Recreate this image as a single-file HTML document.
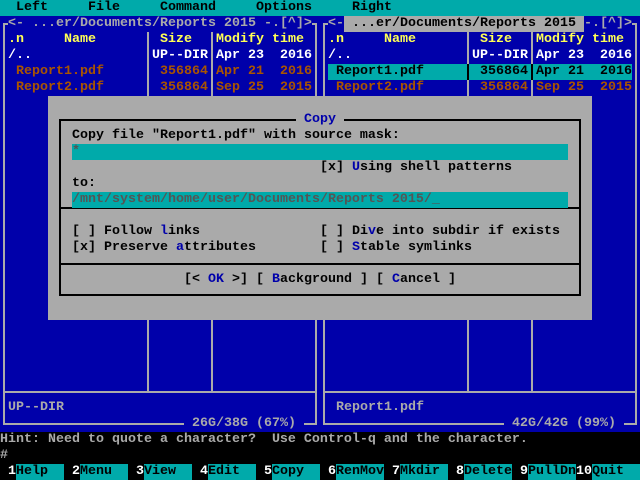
<!DOCTYPE html>
<html><head><meta charset="utf-8"><style>
*{margin:0;padding:0}
body{width:640px;height:480px;background:#000;position:relative;overflow:hidden;font-family:"Liberation Mono",monospace;font-size:13.33px;font-weight:bold}
.b{position:absolute}
.t{position:absolute;white-space:pre;line-height:16px;height:16px}
.g{color:#aaaaaa}.w{color:#ffffff}.y{color:#ffff55}.o{color:#aa5500}.k{color:#000}.u{color:#0000aa}.d{color:#555555}
.vl{position:absolute;width:2px;background:#aaaaaa}
.hl{position:absolute;height:2px;background:#aaaaaa}
.bk{background:#000}
.c{position:absolute;top:464px;width:48px;height:16px;background:#00aaaa;color:#000;white-space:pre;line-height:16px}
</style></head><body>
<div class="b" style="left:0;top:0;width:640px;height:16px;background:#00aaaa"></div>
<div class="t k" style="left:16px;top:0">Left</div>
<div class="t k" style="left:88px;top:0">File</div>
<div class="t k" style="left:160px;top:0">Command</div>
<div class="t k" style="left:256px;top:0">Options</div>
<div class="t k" style="left:352px;top:0">Right</div>
<div class="b" style="left:0;top:16px;width:640px;height:416px;background:#0000aa"></div>
<div class="vl" style="left:3px;top:23px;height:402px"></div>
<div class="vl" style="left:315px;top:23px;height:402px"></div>
<div class="hl" style="left:3px;top:23px;width:314px"></div>
<div class="hl" style="left:3px;top:391px;width:314px"></div>
<div class="hl" style="left:3px;top:423px;width:314px"></div>
<div class="vl" style="left:147px;top:32px;height:361px"></div>
<div class="vl" style="left:211px;top:32px;height:361px"></div>
<div class="vl" style="left:323px;top:23px;height:402px"></div>
<div class="vl" style="left:635px;top:23px;height:402px"></div>
<div class="hl" style="left:323px;top:23px;width:314px"></div>
<div class="hl" style="left:323px;top:391px;width:314px"></div>
<div class="hl" style="left:323px;top:423px;width:314px"></div>
<div class="vl" style="left:467px;top:32px;height:361px"></div>
<div class="vl" style="left:531px;top:32px;height:361px"></div>
<div class="t g" style="left:8px;top:16px;background:#0000aa">&lt;- ...er/Documents/Reports 2015 -.[^]&gt;</div>
<div class="t g" style="left:328px;top:16px;background:#0000aa">&lt;-</div>
<div class="t k" style="left:344px;top:16px;background:#aaaaaa"> ...er/Documents/Reports 2015 </div>
<div class="t g" style="left:584px;top:16px;background:#0000aa">-.[^]&gt;</div>
<div class="t y" style="left:8px;top:32px">.n</div>
<div class="t y" style="left:64px;top:32px">Name</div>
<div class="t y" style="left:160px;top:32px">Size</div>
<div class="t y" style="left:216px;top:32px;background:#0000aa">Modify time</div>
<div class="t w" style="left:8px;top:48px">/..</div>
<div class="t w" style="left:152px;top:48px">UP--DIR</div>
<div class="t w" style="left:216px;top:48px">Apr 23  2016</div>
<div class="t o" style="left:16px;top:64px">Report1.pdf</div>
<div class="t o" style="left:160px;top:64px">356864</div>
<div class="t o" style="left:216px;top:64px">Apr 21  2016</div>
<div class="t o" style="left:16px;top:80px">Report2.pdf</div>
<div class="t o" style="left:160px;top:80px">356864</div>
<div class="t o" style="left:216px;top:80px">Sep 25  2015</div>
<div class="t y" style="left:328px;top:32px">.n</div>
<div class="t y" style="left:384px;top:32px">Name</div>
<div class="t y" style="left:480px;top:32px">Size</div>
<div class="t y" style="left:536px;top:32px;background:#0000aa">Modify time</div>
<div class="t w" style="left:328px;top:48px">/..</div>
<div class="t w" style="left:472px;top:48px">UP--DIR</div>
<div class="t w" style="left:536px;top:48px">Apr 23  2016</div>
<div class="b" style="left:328px;top:64px;width:304px;height:16px;background:#00aaaa"></div>
<div class="b bk" style="left:467px;top:64px;width:2px;height:16px"></div>
<div class="b bk" style="left:531px;top:64px;width:2px;height:16px"></div>
<div class="t k" style="left:336px;top:64px">Report1.pdf</div>
<div class="t k" style="left:480px;top:64px">356864</div>
<div class="t k" style="left:536px;top:64px">Apr 21  2016</div>
<div class="t o" style="left:336px;top:80px">Report2.pdf</div>
<div class="t o" style="left:480px;top:80px">356864</div>
<div class="t o" style="left:536px;top:80px">Sep 25  2015</div>
<div class="t g" style="left:8px;top:400px">UP--DIR</div>
<div class="t g" style="left:336px;top:400px">Report1.pdf</div>
<div class="t g" style="left:184px;top:416px;background:#0000aa"> 26G/38G (67%) </div>
<div class="t g" style="left:504px;top:416px;background:#0000aa"> 42G/42G (99%) </div>
<div class="b" style="left:48px;top:96px;width:544px;height:224px;background:#aaaaaa"></div>
<div class="b" style="left:59px;top:119px;width:518px;height:173px;border:2px solid #000"></div>
<div class="b bk" style="left:59px;top:207px;width:522px;height:2px"></div>
<div class="b bk" style="left:59px;top:263px;width:522px;height:2px"></div>
<div class="t u" style="left:296px;top:112px;background:#aaaaaa"> Copy </div>
<div class="t k" style="left:72px;top:128px">Copy file "Report1.pdf" with source mask:</div>
<div class="b" style="left:72px;top:144px;width:496px;height:16px;background:#00aaaa"></div>
<div class="t d" style="left:72px;top:144px">*</div>
<div class="t k" style="left:320px;top:160px">[x] <span class="u">U</span>sing shell patterns</div>
<div class="t k" style="left:72px;top:176px">to:</div>
<div class="b" style="left:72px;top:192px;width:496px;height:16px;background:#00aaaa"></div>
<div class="t d" style="left:72px;top:192px">/mnt/system/home/user/Documents/Reports 2015/_</div>
<div class="t k" style="left:72px;top:224px">[ ] Follow <span class="u">l</span>inks</div>
<div class="t k" style="left:320px;top:224px">[ ] Di<span class="u">v</span>e into subdir if exists</div>
<div class="t k" style="left:72px;top:240px">[x] Preserve <span class="u">a</span>ttributes</div>
<div class="t k" style="left:320px;top:240px">[ ] <span class="u">S</span>table symlinks</div>
<div class="t k" style="left:184px;top:272px">[&lt; <span class="u">OK</span> &gt;] [ <span class="u">B</span>ackground ] [ <span class="u">C</span>ancel ]</div>
<div class="t g" style="left:0;top:432px">Hint: Need to quote a character?  Use Control-q and the character.</div>
<div class="t g" style="left:0;top:448px">#</div>
<div class="t w" style="left:8px;top:464px">1</div>
<div class="t w" style="left:72px;top:464px">2</div>
<div class="t w" style="left:136px;top:464px">3</div>
<div class="t w" style="left:200px;top:464px">4</div>
<div class="t w" style="left:264px;top:464px">5</div>
<div class="t w" style="left:328px;top:464px">6</div>
<div class="t w" style="left:392px;top:464px">7</div>
<div class="t w" style="left:456px;top:464px">8</div>
<div class="t w" style="left:520px;top:464px">9</div>
<div class="t w" style="left:576px;top:464px">10</div>
<div class="c" style="left:16px">Help</div>
<div class="c" style="left:80px">Menu</div>
<div class="c" style="left:144px">View</div>
<div class="c" style="left:208px">Edit</div>
<div class="c" style="left:272px">Copy</div>
<div class="c" style="left:336px">RenMov</div>
<div class="c" style="left:400px">Mkdir</div>
<div class="c" style="left:464px">Delete</div>
<div class="c" style="left:528px">PullDn</div>
<div class="c" style="left:592px">Quit</div>
</body></html>
